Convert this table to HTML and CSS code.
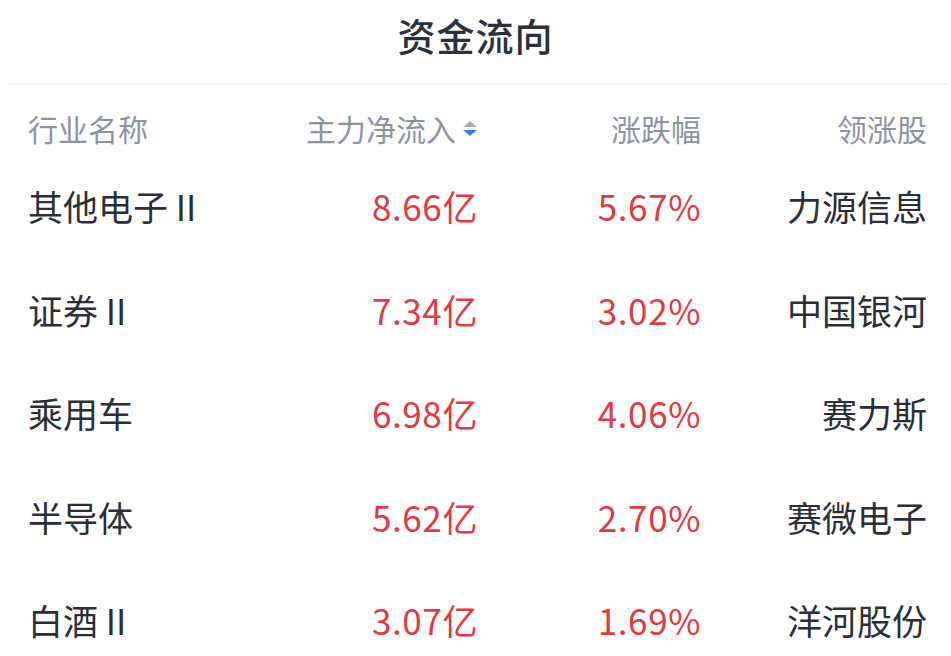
FILE: index.html
```html
<!DOCTYPE html>
<html lang="zh">
<head>
<meta charset="utf-8">
<title>资金流向</title>
<link rel="stylesheet" href="styles.css">
</head>
<body>
<div class="panel">
  <div class="title">资金流向</div>
  <div class="divider"></div>
  <div class="table">
    <div class="row head">
      <div class="c1">行业名称</div>
      <div class="c2 sort">主力净流入<span class="sort-icon"><i class="up"></i><i class="down"></i></span></div>
      <div class="c3">涨跌幅</div>
      <div class="c4">领涨股</div>
    </div>
    <div class="row">
      <div class="c1">其他电子 II</div>
      <div class="c2 red">8.66亿</div>
      <div class="c3 red">5.67%</div>
      <div class="c4">力源信息</div>
    </div>
    <div class="row">
      <div class="c1">证券 II</div>
      <div class="c2 red">7.34亿</div>
      <div class="c3 red">3.02%</div>
      <div class="c4">中国银河</div>
    </div>
    <div class="row">
      <div class="c1">乘用车</div>
      <div class="c2 red">6.98亿</div>
      <div class="c3 red">4.06%</div>
      <div class="c4">赛力斯</div>
    </div>
    <div class="row">
      <div class="c1">半导体</div>
      <div class="c2 red">5.62亿</div>
      <div class="c3 red">2.70%</div>
      <div class="c4">赛微电子</div>
    </div>
    <div class="row">
      <div class="c1">白酒 II</div>
      <div class="c2 red">3.07亿</div>
      <div class="c3 red">1.69%</div>
      <div class="c4">洋河股份</div>
    </div>
  </div>
</div>
</body>
</html>
```

FILE: styles.css
```css
html, body {
  margin: 0;
  padding: 0;
  background: #ffffff;
}
body {
  font-family: "Noto Sans CJK SC", "Noto Sans", sans-serif;
  color: #2a2e38;
}
.panel {
  width: 951px;
  height: 656px;
  overflow: hidden;
}
.title {
  height: 69px;
  padding-bottom: 14px;
  display: flex;
  align-items: center;
  justify-content: center;
  font-size: 38px;
  font-weight: 500;
  color: #2b3040;
  letter-spacing: 1px;
}
.divider {
  height: 2px;
  margin: 0 4px 0 7px;
  background: #eff1f3;
}
.table {
  padding: 0 24px 0 28px;
}
.row {
  display: grid;
  grid-template-columns: 180px 270px 223px 226px;
  align-items: center;
  height: 103.5px;
  font-size: 35px;
}
.row.head {
  height: 40px;
  padding: 21px 0 8px;
  font-size: 30px;
  color: #8b92a3;
}
.c1 { text-align: left; }
.c2, .c3, .c4 { text-align: right; }
.red {
  color: #e3393f;
  letter-spacing: 0.6px;
}
.sort {
  display: flex;
  justify-content: flex-end;
  align-items: center;
  gap: 7px;
}
.sort-icon {
  display: flex;
  flex-direction: column;
  gap: 3px;
  width: 15px;
}
.sort-icon i {
  width: 0;
  height: 0;
  border-left: 7px solid transparent;
  border-right: 7px solid transparent;
}
.sort-icon .up {
  border-bottom: 6px solid #a9aeb9;
}
.sort-icon .down {
  border-top: 6px solid #3a7ff0;
}
```
